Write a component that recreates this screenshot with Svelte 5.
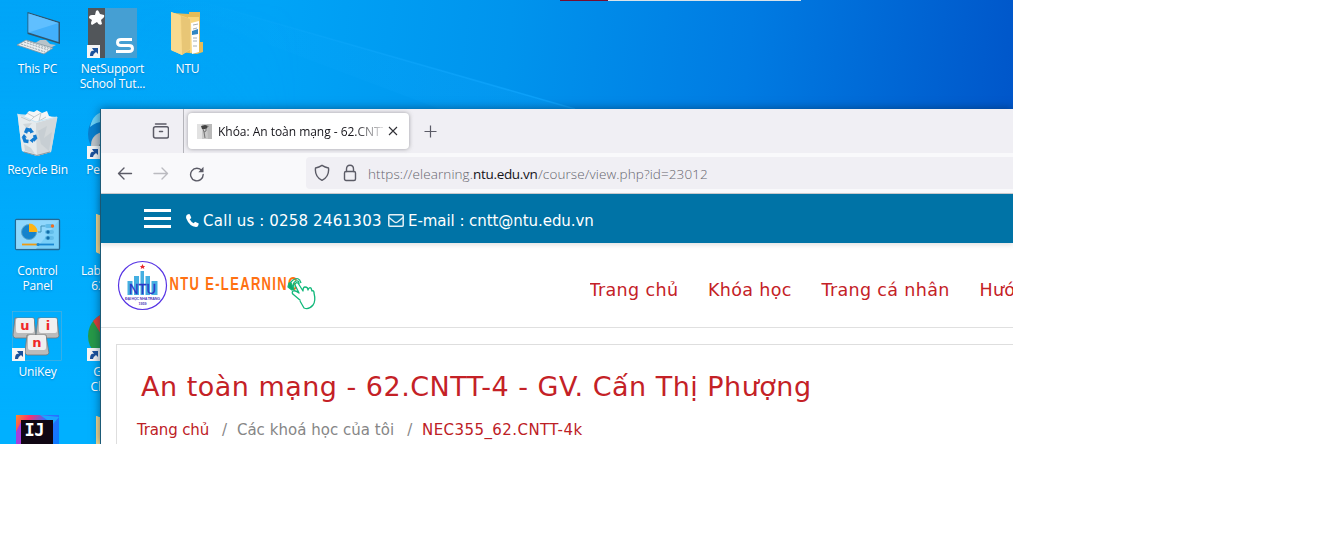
<script>
  const items = [
    { icon: 'pc', label: 'This PC', col: 1, row: 1 },
    { icon: 'bin', label: 'Recycle Bin', col: 1, row: 2 },
    { icon: 'panel', label: 'Control\nPanel', col: 1, row: 3 },
    { icon: 'unikey', label: 'UniKey', col: 1, row: 4, shortcut: true },
    { icon: 'idea', label: '', col: 1, row: 5 },
    { icon: 'net', label: 'NetSupport\nSchool Tut...', col: 2, row: 1, shortcut: true },
    { icon: 'people', label: 'Pen Tools', col: 2, row: 2, shortcut: true },
    { icon: 'folder', label: 'Lab mang 1\n62CNTT', col: 2, row: 3 },
    { icon: 'chrome', label: 'Google\nChrome', col: 2, row: 4, shortcut: true },
    { icon: 'folder', label: '', col: 2, row: 5 },
    { icon: 'folder', label: 'NTU', col: 3, row: 1 }
  ];
  const menu = ['Trang chủ', 'Khóa học', 'Trang cá nhân', 'Hướng dẫn'];
</script>

<div class="desktop">
  <svg class="beam" width="1013" height="110" viewBox="0 0 1013 110">
    <defs>
      <linearGradient id="beamfill" x1="0" y1="0" x2="1" y2="0">
        <stop offset="0" stop-color="#18b0ff" stop-opacity="0" />
        <stop offset="1" stop-color="#10a5ff" stop-opacity=".75" />
      </linearGradient>
    </defs>
    <path d="M195 0L575 109H440L150 0Z" fill="url(#beamfill)" opacity=".3" />
    <path d="M195 0L575 109" stroke="url(#beamfill)" stroke-width="1.5" />
  </svg>
  <div class="topbar"><i></i><b></b></div>

  <div class="icons">
    {#each items as it}
      <div class="item" style="grid-column:{it.col};grid-row:{it.row}">
        <svg width="50" height="50" viewBox="0 0 50 50">
          {#if it.icon === 'pc'}
            <path d="M15.500 4L48 14V36L15.500 26Z" fill="#31556c" />
            <path d="M16.500 5.500L46.500 15V34L16.500 24.500Z" fill="#42b0fb" />
            <path d="M16.500 5.500L46.500 15L16.500 24.500Z" fill="#60bfff" />
            <path d="M28 32L34 32L38 36L44 37L38 40L23 35Z" fill="#b8c3c9" />
            <path d="M5 37L14 32L41 40L32 46Z" fill="#e8ecee" stroke="#7f939e" stroke-width=".8" />
            <path d="M9 36L33 44M12 34L36 42M15 33L39 41" stroke="#8e9ca4" stroke-width=".9" stroke-dasharray="2 1" />
          {:else if it.icon === 'bin'}
            <path d="M5.500 5L45.500 8L39 43L25 47L10 42Z" fill="#dfe5e8" fill-opacity=".92" />
            <path d="M8 6L12 8L17 2L22 3L25 1L30 4L35 2L37 7L42 9L39 13L21 14Z" fill="#f5f6f6" />
            <path d="M5.500 5L24 13L25 47L10 42Z" fill="#e5ebee" />
            <path d="M24 14L45 8L39 43L25 47Z" fill="#d3d8db" />
            <path d="M26 22L35 17L32 29L40 23L37 42L29 35ZM11 15L20 14L15 20ZM12 35L19 39L23 45L13 42Z" fill="#bfc8cd" opacity=".6" />
            <path d="M15 4L22 8L29 4L27 12L34 8M9 8L18 12L22 8" fill="none" stroke="#c2cace" />
            <path d="M5.500 5L24 13L45 8" fill="none" stroke="#c7e4f2" />
            <path d="M12 43L25 46.500L38 43" fill="none" stroke="#8c989e" stroke-width="1.200" />
            <g fill="none" stroke="#137bd0" stroke-width="3.400"><path d="M13.500 24L15 20.500L19.500 21.500M22.500 26L23.500 29L21 31.500M16.500 32.500L13 32L11.500 28" /></g>
            <path d="M18 18.500L22 23L18 24.500ZM21.500 28.500L17.500 31.500L21 34ZM9.500 28.500L12 25L15 28.500Z" fill="#137bd0" />
          {:else if it.icon === 'panel'}
            <rect x="3.500" y="9.500" width="44" height="30" rx="1" fill="#79cff8" stroke="#246994" stroke-width="1.300" />
            <path d="M4 10H47L24 39H4Z" fill="#9bdcfd" opacity=".65" />
            <circle cx="17" cy="22" r="7.500" fill="#1683cb" stroke="#5aa5cb" />
            <path d="M17 22V13.500A8.500 8.500 0 0 1 25.500 22Z" fill="#ffb414" />
            <path d="M26 22H29V16H33M33 22H38M33 28H38" fill="none" stroke="#3e92b8" />
            <g fill="#62bce9"><rect x="33" y="14" width="9" height="4" rx="2" /><rect x="33" y="20" width="9" height="4" rx="2" /><rect x="33" y="26" width="9" height="4" rx="2" /></g>
            <circle cx="40.500" cy="16" r="1.700" fill="#f26d21" /><circle cx="36" cy="22" r="1.700" fill="#126da9" /><circle cx="36" cy="28" r="1.700" fill="#126da9" />
            <path d="M10 34.500H26" stroke="#ee9b12" stroke-width="1.800" /><path d="M26 34.500H42" stroke="#1787d2" stroke-width="1.800" /><circle cx="26" cy="34.500" r="1.500" fill="#1787d2" />
          {:else if it.icon === 'unikey'}
            <rect x=".5" y=".5" width="49" height="49" fill="none" stroke="#5ab0d8" stroke-width=".6" />
            <g stroke="#777" stroke-width=".8">
              <path d="M3 7H22L24 25Q23 27 21 27H3Q1 26 1 24Z" fill="#bbb" /><path d="M26 7H45L47 25Q46 27 44 27H26Q24 26 24 24Z" fill="#bbb" /><path d="M15 24H34L37 42Q36 44 34 44H15Q13 43 13 41Z" fill="#bbb" />
            </g>
            <g fill="#f0f0f0"><rect x="4" y="7" width="18" height="15" rx="2" /><rect x="27" y="7" width="18" height="15" rx="2" /><rect x="16" y="24" width="18" height="15" rx="2" /></g>
            <g class="keys"><text x="13" y="19">u</text><text x="36" y="19">i</text><text x="25" y="36">n</text></g>
          {:else if it.icon === 'idea'}
            <defs>
              <linearGradient id="ij" x1="0" y1="0" x2="1" y2=".6"><stop offset="0" stop-color="#ff8b29" /><stop offset=".25" stop-color="#f9326d" /><stop offset=".55" stop-color="#356cff" /><stop offset="1" stop-color="#087cff" /></linearGradient>
            </defs>
            <path d="M4 3H47V50H4Z" fill="url(#ij)" /><path d="M4 20L10 8V50H4Z" fill="#a43fdc" /><path d="M28 3L47 5L41 12Z" fill="#1ba6ff" />
            <rect x="9" y="8" width="32" height="42" fill="#100613" /><text x="12.500" y="24" class="ij">IJ</text>
          {:else if it.icon === 'net'}
            <rect x="1" y="0" width="49" height="50" fill="#459fd3" /><rect x="1" y="0" width="17" height="50" fill="#52565a" />
            <path d="M9 3Q11 1 12 4L13 6L17 7Q18 9 15 11L14 12L15 16Q12 18 10 14L5 17Q3 16 5 12L2 10Q2 7 5 7L8 7Z" fill="#fff" />
            <path d="M45 31.500H34Q30.500 31.500 30.500 34.500Q30.500 37.500 34 37.500H42Q45.500 37.500 45.500 40.500Q45.500 43.500 42 43.500H29" fill="none" stroke="#fff" stroke-width="2.900" />
          {:else if it.icon === 'people'}
            <circle cx="25" cy="25" r="24" fill="#087fce" /><path d="M3 18Q6 3 20 2V13Q10 12 3 18Z" fill="#6dd3f7" /><circle cx="17" cy="36" r="13" fill="#c1c5c8" /><circle cx="18" cy="38" r="6" fill="#686868" />
          {:else if it.icon === 'chrome'}
            <circle cx="25" cy="25" r="24" fill="#269a47" /><path d="M6 10Q14 1 25 1V31L17 28Z" fill="#e53e35" /><circle cx="25" cy="25" r="10" fill="#fff" />
          {:else}
            <path d="M10 5L27 6V4H38V34H41V44L35 46L10 43Z" fill="#e5bc59" />
            <path d="M26 9H37V43L28 45Z" fill="#f9d77d" />
            <path d="M29 15L37 13V44L30 46Z" fill="#fff" />
            <path d="M31 17L36 16M31 21L35 20M31 30L35 30M31 33L35 33M31 38L35 38" stroke="#a6b0b5" />
            <path d="M30 23L36 21V26L30 27Z" fill="#3187c3" />
            <path d="M9 4L29 11V41L20 47L9 42Z" fill="#f6d685" />
            <path d="M19 8L28 11V41L20 47Z" fill="#e8c676" /><path d="M9 4L18 7L20 47L9 42Z" fill="#f8da8f" />
          {/if}
          {#if it.shortcut}
            <rect x="0" y="37" width="13" height="13" fill="#f5f5f5" />
            <path d="M3 48Q3 42 7 43L5 40H11V46L9 44Q6 46 6 48Z" fill="#1c529c" />
          {/if}
        </svg>
        <span>{it.label}</span>
      </div>
    {/each}
  </div>

  <section class="window">
    <div class="tabs">
      <div class="recent">
        <svg width="17" height="17" viewBox="0 0 17 17" fill="none" stroke="#5b5b66" stroke-width="1.500" stroke-linecap="round"><path d="M3.500 1H14" /><rect x="1.500" y="3.800" width="15" height="11.200" rx="2" /><path d="M7.500 8.500H10.500" /></svg>
      </div>
      <div class="tab">
        <svg width="15" height="15" viewBox="0 0 15 15"><rect width="15" height="15" fill="#c9c9c9" /><path d="M0 0H5V15H0Z" fill="#e2e2e2" /><path d="M4 2L8 1L12 2L9 5L5 5Z" fill="#424242" /><path d="M10 0H15V15H11Z" fill="#aaa" opacity=".5" /><path d="M6 5L7 8L9 7L9 4M7 8L8 14" fill="none" stroke="#727272" /></svg>
        <span class="title">Khóa: An toàn mạng - 62.CNTT-4</span>
        <svg class="close" width="10" height="10" viewBox="0 0 10 10"><path d="M1 1L9 9M9 1L1 9" stroke="#303036" stroke-width="1.100" /></svg>
      </div>
      <svg class="plus" width="14" height="14" viewBox="0 0 14 14"><path d="M6.500 .5V12.500M.5 6.500H12.500" stroke="#5b5b66" stroke-width="1.200" /></svg>
    </div>

    <div class="toolbar">
      <div class="nav-buttons">
        <svg width="16" height="16" viewBox="0 0 16 16"><path d="M14.500 7.500H1.500M7 2L1.500 7.500L7 13" /></svg>
        <svg class="off" width="16" height="16" viewBox="0 0 16 16"><path d="M1 7.500H14.500M9 2L14.500 7.500L9 13" /></svg>
        <svg width="16" height="16" viewBox="0 0 16 16"><path d="M13 4.800A6.300 6.300 0 1 0 14.200 8.500" /><path d="M14.500 .8V6.200H9.300Z" fill="#5b5b66" stroke="none" /></svg>
      </div>
      <div class="url">
        <svg width="16" height="18" viewBox="0 0 16 18"><path d="M8 1.300Q11 3.300 14.500 4Q15.500 12.500 8 16.300Q.5 12.500 1.500 4Q5 3.300 8 1.300Z" /></svg>
        <svg width="14" height="18" viewBox="0 0 14 18"><rect x="1.500" y="7.500" width="11" height="9" rx="1.500" /><path d="M3.500 7.500V5Q3.500 1.200 7 1.200Q10.500 1.200 10.500 5V7.500" /></svg>
        <span>https://elearning.<b>ntu.edu.vn</b>/course/view.php?id=23012</span>
      </div>
    </div>

    <div class="contact">
      <div class="burger"><i></i><i></i><i></i></div>
      <svg width="13" height="13" viewBox="0 0 13 13"><path d="M1 .8L3 0Q3.700 0 4 .7L5.200 3.500Q5.300 4 4.800 4.400L3.700 5.300Q5 7.900 7.700 9.200L8.600 8.200Q9 7.700 9.500 7.900L12.300 9.200Q12.900 9.500 12.700 10L12 12Q11.500 13 10 13Q3.500 12.500 .3 4.500Q-.4 2 1 .8Z" fill="#fff" /></svg>
      <span class="call">Call us : 0258 2461303</span>
      <svg width="16" height="13" viewBox="0 0 16 13" fill="none" stroke="#e5f1f6" stroke-width="1.500"><rect x=".8" y=".8" width="14.400" height="11.400" rx="1" /><path d="M1 3.500L6.500 8Q8 9 9.500 8L15 3.500" /></svg>
      <span class="mail">E-mail : cntt@ntu.edu.vn</span>
    </div>

    <header>
      <svg class="logo" width="202" height="54" viewBox="0 0 202 54">
        <circle cx="25.500" cy="26.500" r="24" fill="#fff" stroke="#5633e4" stroke-width="1.200" />
        <path d="M10.500 22H15.500V36H10.500ZM17 17H22V36H17ZM23.500 12H27V36H23.500ZM28.500 17H33V36H28.500ZM34.500 22H40.500V36H34.500Z" fill="#45afe1" />
        <path d="M25.500 5L26.400 7H28.200L26.800 8.300L27.300 10L25.500 9L23.700 10L24.200 8.300L22.800 7H24.600Z" fill="#ea2930" />
        <text x="25.500" y="34.800" class="ntu" textLength="27" lengthAdjust="spacingAndGlyphs">NTU</text>
        <text x="25.500" y="40.500" class="tiny" textLength="35">ĐẠI HỌC NHA TRANG</text>
        <text x="25.500" y="45.500" class="tiny">1959</text>
        <text x="0" y="30.800" transform="translate(52.500 0) scale(.72 1)" class="brand">NTU E-LEARNING</text>
        <g fill="none" stroke="#11b87a" stroke-width="1.300" stroke-linejoin="round">
          <path d="M183.500 41.500L177 36Q174 34 176 32Q178 31 182 34L178 26Q178 23 181 24L186 32Q186 28 188 28Q191 28 191 31Q192 28 194 29L195 32Q197 31 197 34Q199 42 196 46Q192 51 187 49L183 42" fill="#fff" />
          <path d="M175 29Q171 25 176 21Q182 17 184 24M177 28Q175 24 179 22Q182 21 182 25" /><path d="M172 24L174 24L177 30L175 31L171 28Z" fill="#14a76d" />
        </g>
      </svg>
      <nav>{#each menu as m}<a href="#top">{m}</a>{/each}</nav>
    </header>

    <main>
      <h1>An toàn mạng - 62.CNTT-4 - GV. Cấn Thị Phượng</h1>
      <div class="crumbs"><span class="red first">Trang chủ</span><i>/</i><span class="mid">Các khoá học của tôi</span><i>/</i><span class="red last">NEC355_62.CNTT-4k</span></div>
    </main>
  </section>
</div>

<style>
  :global(body) { margin: 0; background: #fff; }
  * { box-sizing: border-box; }
  .desktop { position: relative; width: 1013px; height: 444px; overflow: hidden; background: linear-gradient(96deg, #00a5f8 0, #00a4f7 270px, #0094ed 510px, #007be2 750px, #0052c7 1050px); }
  .desktop::before { content: ''; position: absolute; inset: 0 auto 0 0; width: 300px; background: linear-gradient(#00a2f600, #00b0ff 420px); mask-image: linear-gradient(90deg, #000 40%, transparent); }
  .beam { position: absolute; left: 0; top: 0; }
  .topbar { position: absolute; left: 560px; top: 0; display: flex; height: 1px; width: 241px; }
  .topbar i { width: 48px; background: #750d31; }
  .topbar b { flex: 1; background: #d9e3ea; }
  .icons { position: relative; display: grid; grid-template-columns: repeat(3, 75px); grid-template-rows: repeat(5, 101px); padding-top: 8px; }
  .item { display: flex; flex-direction: column; align-items: center; }
  .item svg { display: block; flex: none; margin-right: 1px; }
  .item span { margin-top: 3px; font: 12px/15px 'Open Sans', sans-serif; letter-spacing: -.18px; color: #fff; white-space: pre; text-align: center; text-shadow: 0 1px 2px #0066aa99; }
  .keys { font: bold 13px 'DejaVu Sans', sans-serif; fill: #ef2929; text-anchor: middle; }
  .ij { font: bold 17px 'DejaVu Sans Mono', monospace; fill: #fff; letter-spacing: -.5px; }

  .window { position: absolute; left: 100px; top: 109px; width: 913px; height: 335px; border-left: 1px solid #1d5b78; background: #fff; box-shadow: 0 0 9px #00284b99; }
  .tabs { display: flex; height: 44px; background: #f0eff4; }
  .recent { width: 83px; border-right: 1px solid #b5b5bb; padding: 14px 0 0 51px; }
  .tab { width: 221px; height: 36px; margin: 4px 0 0 4px; padding: 0 10px 0 9px; display: flex; align-items: center; background: #fff; border-radius: 4px; box-shadow: 0 0 4px #77777bb0; }
  .title { width: 165px; margin: 1px 0 0 6px; overflow: hidden; white-space: nowrap; font: 12px/18px 'Open Sans', sans-serif; letter-spacing: -.03px; color: #15141a; mask-image: linear-gradient(90deg, #000 82%, #0002); }
  .close { margin-left: 5px; flex: none; }
  .plus { margin: 16px 0 0 15px; }
  .toolbar { display: flex; height: 41px; background: #f9f9fb; border-bottom: 1px solid #ccccd0; }
  .toolbar svg { fill: none; stroke: #5b5b66; stroke-width: 1.4; stroke-linecap: round; stroke-linejoin: round; flex: none; }
  .nav-buttons { width: 205px; display: flex; gap: 20px; padding: 13px 0 0 16px; }
  .toolbar .off { stroke: #bbbbc0; }
  .url { flex: 1; height: 32px; margin-top: 4px; padding-left: 8px; display: flex; align-items: center; background: #f0eff4; border-radius: 4px 0 0 4px; }
  .url svg + svg { margin-left: 13px; }
  .url span { margin: 1px 0 0 11px; font: 300 13.5px/20px 'Open Sans', sans-serif; color: #66666e; letter-spacing: .1px; white-space: nowrap; }
  .url b { font-weight: 400; color: #15141a; letter-spacing: -.33px; margin-right: .8px; }
  .contact { position: relative; display: flex; align-items: center; height: 49px; padding: 3px 0 0 43px; background: #0073a6; box-shadow: 0 2px 5px #0000001f; font: 15px/20px 'DejaVu Sans', sans-serif; color: #fff; }
  .burger { width: 27px; height: 19px; margin: -4px 15px 0 0; display: flex; flex-direction: column; justify-content: space-between; }
  .burger i { height: 3px; background: #fff; }
  .contact span { white-space: nowrap; margin: 2px 0 0 4px; }
  .contact .call { width: 180px; margin-right: 5px; letter-spacing: .27px; word-spacing: -.4px; }
  .mail { letter-spacing: -.06px; }
  header { display: flex; height: 85px; border-bottom: 1px solid #e0e0e0; }
  .logo { margin: 16px 0 0 16px; flex: none; height: 54px; }
  .ntu { font: 14.5px 'Liberation Sans', sans-serif; fill: #2a35c5; stroke: #2a35c5; stroke-width: .3px; text-anchor: middle; }
  .tiny { font: bold 3.7px 'Liberation Sans', sans-serif; fill: #5138ba; text-anchor: middle; }
  .brand { font: bold 18px 'Liberation Sans', sans-serif; fill: #ff7112; letter-spacing: 1.9px; }
  nav { flex: 1; display: flex; gap: 29.6px; margin-left: 270.5px; padding-top: 35px; overflow: hidden; white-space: nowrap; font: 17.5px/24px 'DejaVu Sans', sans-serif; letter-spacing: .36px; }
  nav a { color: #c42126; text-decoration: none; flex: none; }
  main { margin: 16px 0 0 15px; height: 100px; border: 1px solid #dedede; border-width: 1px 0 0 1px; padding: 24px 0 0 20px; overflow: hidden; }
  h1 { margin: 0 0 0 4px; font: 27px/36px 'DejaVu Sans', sans-serif; letter-spacing: .49px; color: #c42126; white-space: nowrap; }
  .crumbs { display: flex; margin-top: 15px; font: 15px/20px 'DejaVu Sans', sans-serif; color: #868686; white-space: nowrap; }
  .crumbs i { font-style: normal; margin: 0 9.8px 0 13px; }
  .crumbs .first { letter-spacing: -.15px; }
  .crumbs .mid { letter-spacing: .03px; }
  .crumbs .last { letter-spacing: .43px; }
  .red { color: #bd2025; }
</style>
